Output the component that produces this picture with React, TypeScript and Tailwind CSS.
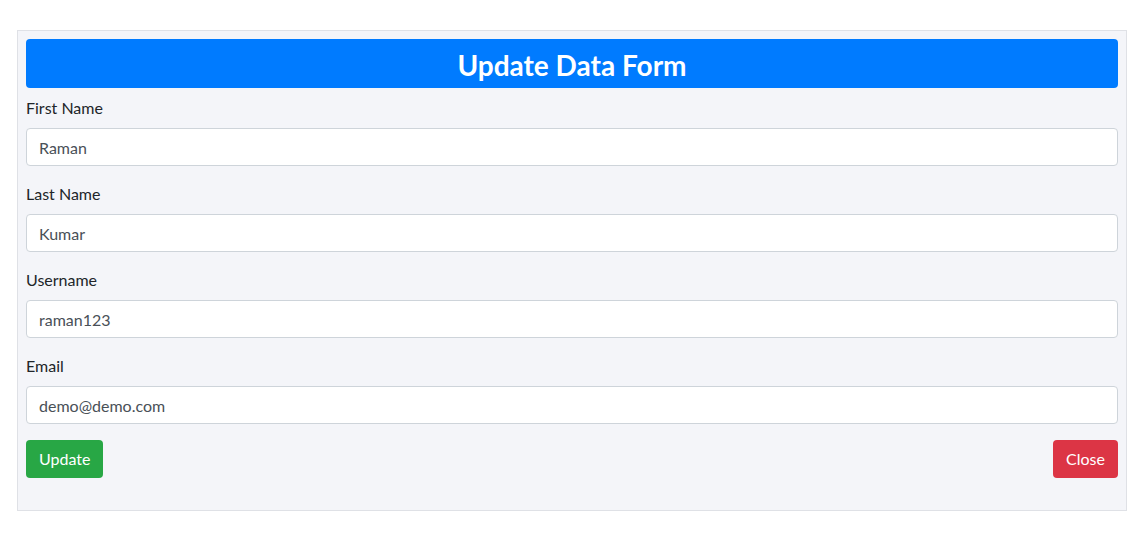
const fields = [
  { label: 'First Name', value: 'Raman' },
  { label: 'Last Name', value: 'Kumar' },
  { label: 'Username', value: 'raman123' },
  { label: 'Email', value: 'demo@demo.com' },
]

export default function App() {
  return (
    <div className="min-h-screen bg-white pt-[30px] px-[17px]" style={{ fontFamily: 'Lato, "Noto Sans", sans-serif' }}>
      <div className="w-[1110px] border border-[#dfe1e6] bg-[#f4f5f9] px-2 pt-2 pb-8">
        <h2 className="rounded bg-[#007bff] h-[49px] pt-[3px] leading-[46px] text-center text-[28px] font-bold text-white mb-2">
          Update Data Form
        </h2>
        {fields.map((f) => (
          <div key={f.label} className="mb-4">
            <label className="block mb-2 text-base leading-6 text-[#212529]">{f.label}</label>
            <input
              readOnly
              value={f.value}
              className="block w-full h-[38px] rounded border border-[#ced4da] bg-white px-3 text-base text-[#495057] outline-none"
            />
          </div>
        ))}
        <div className="flex justify-between">
          <button className="h-[38px] rounded bg-[#28a745] px-[13px] text-base text-white">Update</button>
          <button className="h-[38px] rounded bg-[#dc3545] px-[13px] text-base text-white">Close</button>
        </div>
      </div>
    </div>
  )
}
